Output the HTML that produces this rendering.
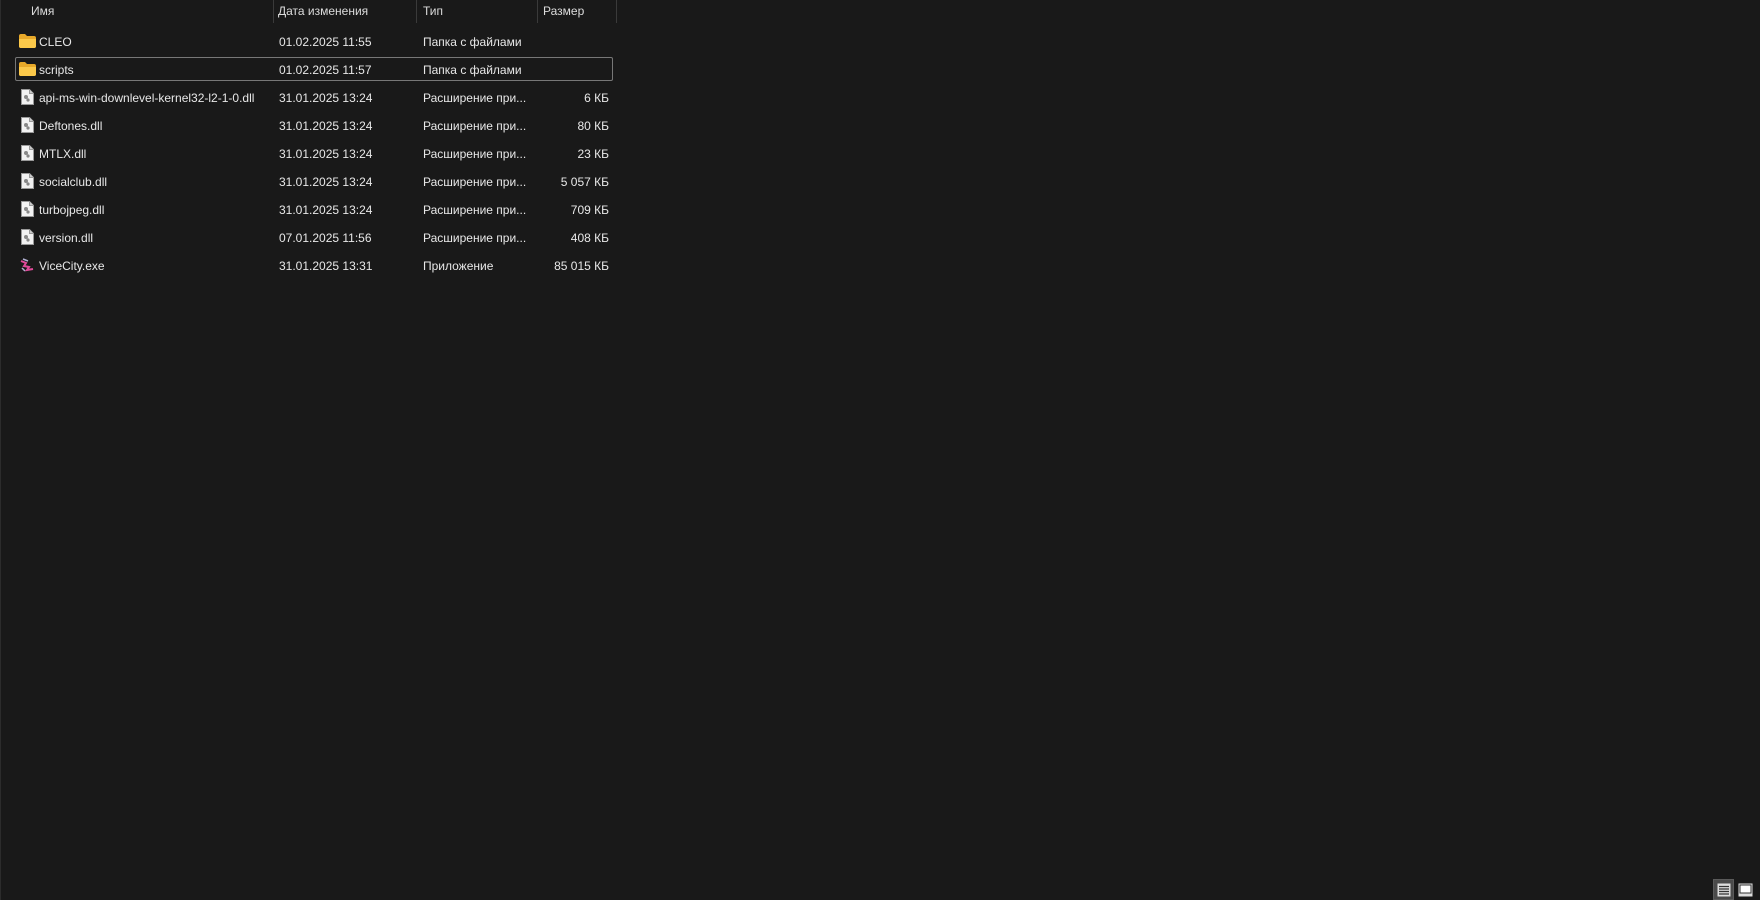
<!DOCTYPE html>
<html><head><meta charset="utf-8"><style>
html,body{margin:0;padding:0;background:#191919;width:1760px;height:900px;overflow:hidden;font-family:"Liberation Sans",sans-serif;font-size:12px;color:#e8e8e8}
.abs{position:absolute;white-space:nowrap}
.hd{color:#dcdcdc;top:4px}
.sep{position:absolute;top:0;width:1px;height:23px;background:#3a3a3a}
.row{position:absolute;left:0;width:620px;height:28px}
.row span{position:absolute;top:8px;white-space:nowrap}
.n{left:39px}.d{left:279px}.t{left:423px}.s{right:11px}
.ic{position:absolute;left:20px;top:7px}
</style></head><body>
<div style="position:absolute;left:0;top:0;width:1px;height:900px;background:#2c2c2c"></div>
<div class="abs hd" style="left:31px">Имя</div>
<div class="abs" style="left:143px;top:-6px;color:#aaa;font-size:10px">^</div>
<div class="sep" style="left:273px"></div>
<div class="abs hd" style="left:278px">Дата изменения</div>
<div class="sep" style="left:416px"></div>
<div class="abs hd" style="left:423px">Тип</div>
<div class="sep" style="left:537px"></div>
<div class="abs hd" style="left:543px">Размер</div>
<div class="sep" style="left:616px"></div>

<div style="position:absolute;left:15px;top:57px;width:596px;height:22px;border:1px solid #777;border-radius:2px"></div>

<div id="rows"></div>
<script>
const folder='<svg class="ic" width="17" height="14" viewBox="0 0 17 14" style="left:19px;top:7px"><path d="M0 2 Q0 0 2 0 H6 L8 2 H15 Q17 2 17 4 V12 Q17 14 15 14 H2 Q0 14 0 12Z" fill="#e8a92a"/><path d="M0 5 H17 V12 Q17 14 15 14 H2 Q0 14 0 12Z" fill="#fcc94a"/></svg>';
const dll='<svg class="ic" width="13" height="16" viewBox="0 0 13 16" style="left:21px;top:6px"><path d="M0.5 0.5 H8.5 L12.5 4.5 V15.5 H0.5Z" fill="#f2f2f2" stroke="#999"/><path d="M8.5 0.5 V4.5 H12.5" fill="#ccc" stroke="#999"/><circle cx="5" cy="8" r="2" fill="#888"/><circle cx="7" cy="11" r="1.6" fill="#888"/></svg>';
const exe='<svg class="ic" width="16" height="14" viewBox="0 0 16 14" style="left:19px;top:7px"><path d="M2 3 L7 5 L5 8 L10 9 L8 12 L14 11" stroke="#e04a9a" stroke-width="2" fill="none"/><path d="M4 1 L9 3 M3 10 L6 13" stroke="#b0b0d0" stroke-width="1.5"/></svg>';
const r=[[folder,'CLEO','01.02.2025 11:55','Папка с файлами',''],
[folder,'scripts','01.02.2025 11:57','Папка с файлами',''],
[dll,'api-ms-win-downlevel-kernel32-l2-1-0.dll','31.01.2025 13:24','Расширение при...','6 КБ'],
[dll,'Deftones.dll','31.01.2025 13:24','Расширение при...','80 КБ'],
[dll,'MTLX.dll','31.01.2025 13:24','Расширение при...','23 КБ'],
[dll,'socialclub.dll','31.01.2025 13:24','Расширение при...','5 057 КБ'],
[dll,'turbojpeg.dll','31.01.2025 13:24','Расширение при...','709 КБ'],
[dll,'version.dll','07.01.2025 11:56','Расширение при...','408 КБ'],
[exe,'ViceCity.exe','31.01.2025 13:31','Приложение','85 015 КБ']];
let h='';r.forEach((x,i)=>{h+=`<div class="row" style="top:${27+i*28}px">${x[0]}<span class="n">${x[1]}</span><span class="d">${x[2]}</span><span class="t">${x[3]}</span><span class="s">${x[4]}</span></div>`});
document.getElementById('rows').innerHTML=h;
</script>
<div style="position:absolute;left:1713px;top:879px;width:21px;height:21px;background:#4a4a4a;border:1px solid #5a5a5a;box-sizing:border-box"></div>
<svg style="position:absolute;left:1717px;top:883px" width="14" height="14" viewBox="0 0 14 14"><rect x="0.5" y="0.5" width="13" height="13" fill="#ddd"/><path d="M2 3.5H12M2 6H12M2 8.5H12M2 11H12" stroke="#333" stroke-width="1.3"/></svg>
<svg style="position:absolute;left:1738px;top:883px" width="15" height="14" viewBox="0 0 15 14"><rect x="0.5" y="0.5" width="14" height="13" fill="#ddd"/><rect x="2" y="2" width="11" height="8" fill="#fff" stroke="#333"/></svg>
</body></html>
